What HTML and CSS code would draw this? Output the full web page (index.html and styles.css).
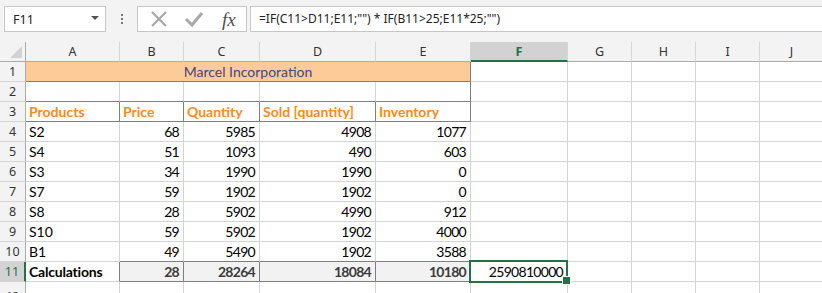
FILE: index.html
```html
<!DOCTYPE html>
<html lang="en">
<head>
    <meta charset="UTF-8">
    <title>Marcel Incorporation</title>
    <link rel="stylesheet" href="styles.css">
</head>
<body>
    <div class="formula-bar">
        <div class="name-box">
            <span>F11</span>
            <span class="caret"></span>
        </div>
        <div class="grip"><i></i><i></i><i></i></div>
        <div class="fx-buttons">
            <svg class="btn-icon" width="18" height="18" viewBox="0 0 18 18"><path d="M2 2 L16 16 M16 2 L2 16" stroke="#a8a8a8" stroke-width="2.2" fill="none"/></svg>
            <svg class="btn-icon" width="20" height="18" viewBox="0 0 20 18"><path d="M2 9 L8 15 L18 3" stroke="#a8a8a8" stroke-width="3" fill="none"/></svg>
            <span class="fx">fx</span>
        </div>
        <div class="formula-input">=IF(C11&gt;D11;E11;"") * IF(B11&gt;25;E11*25;"")</div>
    </div>

    <div class="sheet">
        <!-- column headers -->
        <div class="corner"><span class="corner-tri"></span></div>
        <div class="ch">A</div>
        <div class="ch">B</div>
        <div class="ch">C</div>
        <div class="ch">D</div>
        <div class="ch">E</div>
        <div class="ch ch-active">F</div>
        <div class="ch">G</div>
        <div class="ch">H</div>
        <div class="ch">I</div>
        <div class="ch">J</div>

        <!-- row 1 -->
        <div class="rh">1</div>
        <div class="c title">Marcel Incorporation</div>
        <div class="c"></div><div class="c"></div><div class="c"></div><div class="c"></div><div class="c"></div>

        <!-- row 2 -->
        <div class="rh">2</div>
        <div class="c bb"></div><div class="c bb"></div><div class="c bb"></div><div class="c bb"></div><div class="c bb br"></div>
        <div class="c"></div><div class="c"></div><div class="c"></div><div class="c"></div><div class="c"></div>

        <!-- row 3 -->
        <div class="rh">3</div>
        <div class="c hd bb br">Products</div>
        <div class="c hd bb br">Price</div>
        <div class="c hd bb br">Quantity</div>
        <div class="c hd bb br">Sold [quantity]</div>
        <div class="c hd bb br">Inventory</div>
        <div class="c"></div><div class="c"></div><div class="c"></div><div class="c"></div><div class="c"></div>

        <!-- rows 4-10 -->
        <div class="rh">4</div>
        <div class="c">S2</div><div class="c num">68</div><div class="c num">5985</div><div class="c num">4908</div><div class="c num">1077</div>
        <div class="c"></div><div class="c"></div><div class="c"></div><div class="c"></div><div class="c"></div>

        <div class="rh">5</div>
        <div class="c">S4</div><div class="c num">51</div><div class="c num">1093</div><div class="c num">490</div><div class="c num">603</div>
        <div class="c"></div><div class="c"></div><div class="c"></div><div class="c"></div><div class="c"></div>

        <div class="rh">6</div>
        <div class="c">S3</div><div class="c num">34</div><div class="c num">1990</div><div class="c num">1990</div><div class="c num">0</div>
        <div class="c"></div><div class="c"></div><div class="c"></div><div class="c"></div><div class="c"></div>

        <div class="rh">7</div>
        <div class="c">S7</div><div class="c num">59</div><div class="c num">1902</div><div class="c num">1902</div><div class="c num">0</div>
        <div class="c"></div><div class="c"></div><div class="c"></div><div class="c"></div><div class="c"></div>

        <div class="rh">8</div>
        <div class="c">S8</div><div class="c num">28</div><div class="c num">5902</div><div class="c num">4990</div><div class="c num">912</div>
        <div class="c"></div><div class="c"></div><div class="c"></div><div class="c"></div><div class="c"></div>

        <div class="rh">9</div>
        <div class="c">S10</div><div class="c num">59</div><div class="c num">5902</div><div class="c num">1902</div><div class="c num">4000</div>
        <div class="c"></div><div class="c"></div><div class="c"></div><div class="c"></div><div class="c"></div>

        <div class="rh">10</div>
        <div class="c">B1</div><div class="c num bb">49</div><div class="c num bb">5490</div><div class="c num bb">1902</div><div class="c num bb">3588</div>
        <div class="c"></div><div class="c"></div><div class="c"></div><div class="c"></div><div class="c"></div>

        <!-- row 11 -->
        <div class="rh rh-active">11</div>
        <div class="c bold br">Calculations</div>
        <div class="c num total">28</div>
        <div class="c num total">28264</div>
        <div class="c num total">18084</div>
        <div class="c num total">10180</div>
        <div class="c num selected">2590810000</div>
        <div class="c"></div><div class="c"></div><div class="c"></div><div class="c"></div>

        <!-- row 12, cut by the window edge -->
        <div class="rh rh-last">12</div>
        <div class="c"></div><div class="c"></div><div class="c"></div><div class="c"></div><div class="c"></div>
        <div class="c"></div><div class="c"></div><div class="c"></div><div class="c"></div><div class="c"></div>
    </div>
</body>
</html>
```

FILE: styles.css
```css
* { box-sizing: border-box; margin: 0; padding: 0; }
body {
    background-color: #ffffff;
    width: 822px;
    height: 293px;
    overflow: hidden;
    font-family: 'Lato', 'Liberation Sans', sans-serif;
    color: #000;
}

/* formula bar */
.formula-bar {
    height: 42px;
    background-color: #f3f3f3;
    display: flex;
    align-items: flex-start;
    padding: 6px 0 0 4px;
    font-family: 'Noto Sans', 'Open Sans', sans-serif;
    font-size: 12px;
    color: #222;
}
.name-box {
    width: 102px;
    height: 26px;
    background-color: #fff;
    border: 1px solid #c6c6c6;
    display: flex;
    align-items: center;
    justify-content: space-between;
    padding: 0 6px 0 8px;
    font-size: 12.5px;
}
.caret {
    width: 0;
    height: 0;
    border-left: 4px solid transparent;
    border-right: 4px solid transparent;
    border-top: 4px solid #555;
    margin-top: -2px;
}
.grip {
    width: 31px;
    height: 26px;
    display: flex;
    flex-direction: column;
    align-items: center;
    justify-content: center;
    gap: 2px;
}
.grip i {
    display: block;
    width: 2px;
    height: 2px;
    background-color: #777;
}
.fx-buttons {
    width: 110px;
    height: 26px;
    background-color: #fff;
    border: 1px solid #c6c6c6;
    display: flex;
    align-items: center;
    padding-left: 12px;
    gap: 16px;
}
.fx {
    font-family: 'Liberation Serif', serif;
    font-style: italic;
    font-size: 19px;
    color: #505050;
    margin-left: 2px;
    line-height: 1;
}
.formula-input {
    flex: 1;
    height: 26px;
    margin-left: 3px;
    background-color: #fff;
    border: 1px solid #c6c6c6;
    border-right: none;
    padding-left: 8px;
    line-height: 24px;
    white-space: nowrap;
}

/* sheet grid */
.sheet {
    display: grid;
    grid-template-columns: 26px 94px 64px 76px 116px 95px 97px 64px 64px 64px 64px;
    grid-auto-rows: 20px;
    font-size: 14px;
}
.corner, .ch, .rh {
    background-color: #f3f3f3;
    font-family: 'Noto Sans', 'Open Sans', sans-serif;
    font-size: 12.5px;
    color: #333;
    display: flex;
    align-items: center;
    justify-content: center;
}
.corner {
    border-right: 1px solid #ababab;
    border-bottom: 1px solid #ababab;
    position: relative;
}
.corner-tri {
    position: absolute;
    right: 3px;
    bottom: 3px;
    width: 0;
    height: 0;
    border-left: 12px solid transparent;
    border-bottom: 12px solid #d2d2d2;
}
.ch {
    border-right: 1px solid #d5d5d5;
    border-bottom: 1px solid #ababab;
}
.ch-active {
    background-color: #d2d2d2;
    color: #217346;
    font-weight: 700;
    border-bottom: 2px solid #217346;
}
.rh {
    border-right: 1px solid #ababab;
    border-bottom: 1px solid #d5d5d5;
}
.rh-active {
    background-color: #d2d2d2;
    color: #217346;
    border-right: 2px solid #217346;
}
.rh-last {
    align-items: flex-start;
    padding-top: 8px;
    font-size: 11px;
    line-height: 12px;
}

.c {
    border-right: 1px solid #d4d4d4;
    border-bottom: 1px solid #d4d4d4;
    padding: 0 3px 1px;
    display: flex;
    align-items: flex-end;
    white-space: nowrap;
    overflow: visible;
    line-height: 17px;
}
.num {
    justify-content: flex-end;
    letter-spacing: -0.7px;
    padding-right: 4px;
}
.bold { font-weight: 700; letter-spacing: -0.2px; }
.bb { border-bottom-color: #7f7f7f; }
.br { border-right-color: #7f7f7f; }

.title {
    grid-column: span 5;
    background-color: #fccb98;
    color: #46467a;
    justify-content: center;
    border-right-color: #7f7f7f;
    border-bottom-color: #7f7f7f;
}
.hd {
    color: #fb8a1e;
    font-weight: 700;
}
.total {
    background-color: #f2f2f2;
    color: #3b3b3b;
    font-weight: 700;
    border-right-color: #7f7f7f;
    border-bottom-color: #7f7f7f;
}
.selected {
    position: relative;
}
.selected::before {
    content: "";
    position: absolute;
    left: -2px;
    top: -2px;
    right: -1px;
    bottom: -2px;
    border: 2px solid #217346;
}
.selected::after {
    content: "";
    position: absolute;
    right: -4px;
    bottom: -4px;
    width: 7px;
    height: 7px;
    background-color: #217346;
    border: 1px solid #fff;
}
```
